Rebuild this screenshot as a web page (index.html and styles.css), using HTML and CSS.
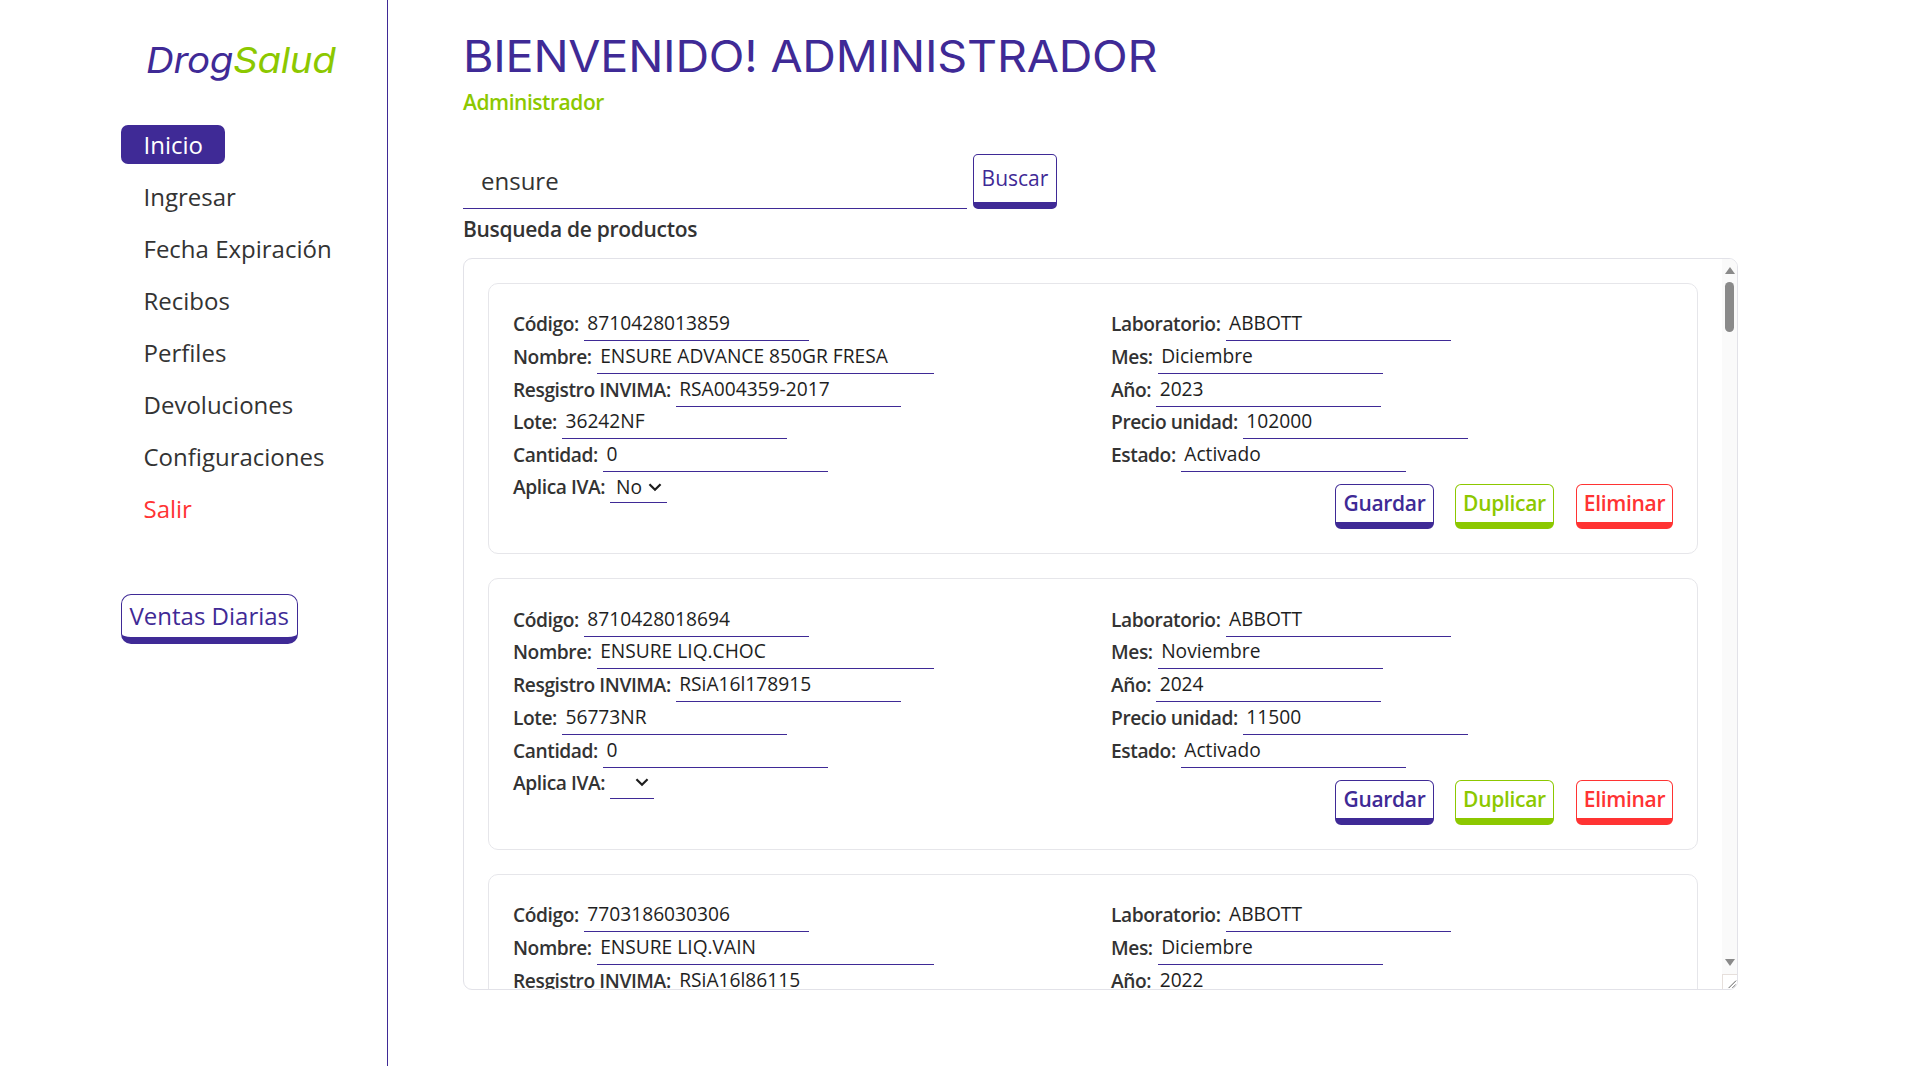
FILE: index.html
```html
<!DOCTYPE html>
<html lang="es">
<head>
<meta charset="utf-8">
<title>DrogSalud</title>
<link rel="stylesheet" href="styles.css">
</head>
<body>
<aside class="sidebar">
  <div class="logo"><span class="logo-a">Drog</span><span class="logo-b">Salud</span></div>
  <nav class="nav">
    <a class="nav-item active">Inicio</a>
    <a class="nav-item">Ingresar</a>
    <a class="nav-item">Fecha Expiración</a>
    <a class="nav-item">Recibos</a>
    <a class="nav-item">Perfiles</a>
    <a class="nav-item">Devoluciones</a>
    <a class="nav-item">Configuraciones</a>
    <a class="nav-item danger">Salir</a>
  </nav>
  <a class="btn-ventas">Ventas Diarias</a>
</aside>
<main class="main">
  <h1 class="title">BIENVENIDO! ADMINISTRADOR</h1>
  <div class="role">Administrador</div>
  <div class="search">
    <div class="search-input">ensure</div>
    <a class="btn-buscar">Buscar</a>
  </div>
  <div class="section-label">Busqueda de productos</div>
  <section class="box">
    <div class="list">
      <article class="card">
        <div class="col">
          <div class="row"><span class="lbl">Código:</span><span class="field w225">8710428013859</span></div>
          <div class="row"><span class="lbl">Nombre:</span><span class="field w337">ENSURE ADVANCE 850GR FRESA</span></div>
          <div class="row"><span class="lbl">Resgistro INVIMA:</span><span class="field w225">RSA004359-2017</span></div>
          <div class="row"><span class="lbl">Lote:</span><span class="field w225">36242NF</span></div>
          <div class="row"><span class="lbl">Cantidad:</span><span class="field w225">0</span></div>
          <div class="row row-select"><span class="lbl">Aplica IVA:</span><span class="select">No<svg class="chev" viewBox="0 0 14 9"><path d="M2 2l5 5 5-5"/></svg></span></div>
        </div>
        <div class="col">
          <div class="row"><span class="lbl">Laboratorio:</span><span class="field w225">ABBOTT</span></div>
          <div class="row"><span class="lbl">Mes:</span><span class="field w225">Diciembre</span></div>
          <div class="row"><span class="lbl">Año:</span><span class="field w225">2023</span></div>
          <div class="row"><span class="lbl">Precio unidad:</span><span class="field w225">102000</span></div>
          <div class="row"><span class="lbl">Estado:</span><span class="field w225">Activado</span></div>
          <div class="actions">
            <a class="btn purple">Guardar</a>
            <a class="btn green">Duplicar</a>
            <a class="btn red">Eliminar</a>
          </div>
        </div>
      </article>
      <article class="card">
        <div class="col">
          <div class="row"><span class="lbl">Código:</span><span class="field w225">8710428018694</span></div>
          <div class="row"><span class="lbl">Nombre:</span><span class="field w337">ENSURE LIQ.CHOC</span></div>
          <div class="row"><span class="lbl">Resgistro INVIMA:</span><span class="field w225">RSiA16l178915</span></div>
          <div class="row"><span class="lbl">Lote:</span><span class="field w225">56773NR</span></div>
          <div class="row"><span class="lbl">Cantidad:</span><span class="field w225">0</span></div>
          <div class="row row-select"><span class="lbl">Aplica IVA:</span><span class="select empty"><svg class="chev" viewBox="0 0 14 9"><path d="M2 2l5 5 5-5"/></svg></span></div>
        </div>
        <div class="col">
          <div class="row"><span class="lbl">Laboratorio:</span><span class="field w225">ABBOTT</span></div>
          <div class="row"><span class="lbl">Mes:</span><span class="field w225">Noviembre</span></div>
          <div class="row"><span class="lbl">Año:</span><span class="field w225">2024</span></div>
          <div class="row"><span class="lbl">Precio unidad:</span><span class="field w225">11500</span></div>
          <div class="row"><span class="lbl">Estado:</span><span class="field w225">Activado</span></div>
          <div class="actions">
            <a class="btn purple">Guardar</a>
            <a class="btn green">Duplicar</a>
            <a class="btn red">Eliminar</a>
          </div>
        </div>
      </article>
      <article class="card">
        <div class="col">
          <div class="row"><span class="lbl">Código:</span><span class="field w225">7703186030306</span></div>
          <div class="row"><span class="lbl">Nombre:</span><span class="field w337">ENSURE LIQ.VAIN</span></div>
          <div class="row"><span class="lbl">Resgistro INVIMA:</span><span class="field w225">RSiA16l86115</span></div>
        </div>
        <div class="col">
          <div class="row"><span class="lbl">Laboratorio:</span><span class="field w225">ABBOTT</span></div>
          <div class="row"><span class="lbl">Mes:</span><span class="field w225">Diciembre</span></div>
          <div class="row"><span class="lbl">Año:</span><span class="field w225">2022</span></div>
        </div>
      </article>
    </div>
    <div class="scrollbar">
      <svg class="arrow up" viewBox="0 0 10 7"><path d="M5 0l5 7H0z"/></svg>
      <div class="thumb"></div>
      <div class="spacer"></div>
      <svg class="arrow down" viewBox="0 0 10 7"><path d="M0 0h10L5 7z"/></svg>
      <div class="resizer"><svg viewBox="0 0 15 15"><path d="M6 14L14 6M10 14l4-4"/></svg></div>
    </div>
  </section>
</main>
</body>
</html>
```

FILE: styles.css
```css
* { box-sizing: border-box; }

html, body { margin: 0; padding: 0; background: #fff; }

body {
  display: flex;
  align-items: flex-start;
  font-family: "Open Sans", "Noto Sans", sans-serif;
  color: #212529;
}

.sidebar {
  width: 388px;
  height: 1066px;
  flex: none;
  border-right: 1.5px solid #3f2a96;
  padding: 38px 0 0 121px;
}

.logo {
  width: 200px;
  font-family: Inter, sans-serif;
  font-style: italic;
  font-weight: 400;
  font-size: 36px;
  line-height: 44px;
  letter-spacing: -0.3px;
  margin-left: 25px;
  transform: scaleX(1.07);
  transform-origin: left center;
}
.logo-a { color: #3f2a96; }
.logo-b { color: #8cc800; }

.nav {
  display: flex;
  flex-direction: column;
  align-items: flex-start;
  margin-top: 43px;
  gap: 13px;
}
.nav-item {
  font-size: 24px;
  line-height: 39px;
  height: 39px;
  padding: 0 22.5px;
  color: #333;
  border-radius: 7px;
}
.nav-item.active { background: #3f2a96; color: #fff; }
.nav-item.danger { color: #ff3333; }

.btn-ventas {
  display: inline-block;
  margin-top: 66px;
  height: 50px;
  padding: 0 7.5px;
  font-size: 24px;
  line-height: 41px;
  color: #3f2a96;
  border: 1.5px solid #3f2a96;
  border-bottom-width: 7px;
  border-radius: 10px;
}

.main {
  flex: 1;
  padding: 24px 0 0 75px;
}

.title {
  margin: 0;
  font-family: Inter, sans-serif;
  font-weight: 400;
  font-size: 44px;
  line-height: 64px;
  letter-spacing: -0.2px;
  color: #3f2a96;
  transform: scaleX(1.06);
  transform-origin: left center;
}
.role {
  font-size: 21px;
  font-weight: 600;
  line-height: 28px;
  color: #8cc800;
  letter-spacing: -0.45px;
}

.search {
  display: flex;
  align-items: flex-end;
  gap: 6px;
  margin-top: 38px;
}
.search-input {
  width: 504px;
  height: 45px;
  padding-left: 18px;
  font-size: 24px;
  line-height: 33px;
  border-bottom: 1.5px solid #3f2a96;
  color: #333;
}
.btn-buscar {
  width: 84px;
  height: 55px;
  border: 1.5px solid #3f2a96;
  border-bottom-width: 7px;
  border-radius: 5px;
  text-align: center;
  font-size: 21px;
  line-height: 46px;
  color: #3f2a96;
}
.section-label {
  margin-top: 5px;
  font-size: 21px;
  font-weight: 600;
  line-height: 31px;
  letter-spacing: -0.3px;
  color: #333;
}

.box {
  display: flex;
  width: 1275px;
  height: 732px;
  margin-top: 13px;
  border: 1.5px solid #e2e2e8;
  border-radius: 9px;
  overflow: hidden;
}
.list {
  flex: 1;
  min-width: 0;
  overflow: hidden;
  padding: 23.5px 24px 0;
  display: flex;
  flex-direction: column;
  gap: 24px;
}
.card {
  flex: none;
  display: grid;
  grid-template-columns: 562px 562px;
  column-gap: 36px;
  min-height: 271.5px;
  padding: 24.8px 24px 0;
  border: 1.5px solid #e6e6ea;
  border-radius: 10px;
}
.row {
  display: flex;
  align-items: flex-end;
  gap: 5px;
  height: 32.8px;
}
.row-select { height: 31px; }
.lbl {
  font-size: 19.2px;
  font-weight: 600;
  letter-spacing: -0.42px;
  line-height: 26px;
  color: #333;
  padding-bottom: 4px;
}
.row-select .lbl { padding-bottom: 3px; }
.field {
  display: block;
  height: 30px;
  padding: 0 3.5px;
  font-size: 19.2px;
  line-height: 24px;
  color: #1e1e1e;
  border-bottom: 1.5px solid #3f2a96;
  white-space: nowrap;
}
.w225 { width: 225px; }
.w337 { width: 337px; }

.select {
  display: flex;
  align-items: center;
  gap: 5px;
  height: 30px;
  width: 57px;
  padding: 0 6px 2px;
  font-size: 19.2px;
  line-height: 24px;
  color: #1e1e1e;
  border-bottom: 1.5px solid #3f2a96;
}
.select.empty { width: 44px; justify-content: flex-end; padding: 0 4px 2px; }
.chev { width: 16px; height: 10px; flex: none; }
.chev path { fill: none; stroke: #1e1e1e; stroke-width: 2; }

.actions {
  display: flex;
  justify-content: flex-end;
  gap: 21px;
  margin-top: 12px;
}
.btn {
  width: 99px;
  height: 45px;
  border: 1.5px solid currentColor;
  border-bottom-width: 7px;
  border-radius: 6px;
  text-align: center;
  font-size: 21px;
  font-weight: 600;
  line-height: 36px;
  letter-spacing: -0.3px;
}
.purple { color: #3f2a96; }
.green { color: #8cc800; }
.red { color: #ff3333; width: 97px; margin-left: 1px; }

.scrollbar {
  flex: none;
  width: 15px;
  display: flex;
  flex-direction: column;
  align-items: center;
  background: #fafafa;
}
.arrow { width: 10px; height: 7px; flex: none; }
.arrow path { fill: #8a8a8a; }
.arrow.up { margin-top: 8px; }
.thumb {
  width: 9px;
  height: 50px;
  margin-top: 8px;
  border-radius: 5px;
  background: #8a8a8a;
}
.spacer { flex: 1; }
.arrow.down { margin-bottom: 8px; }
.resizer {
  width: 15px;
  height: 15px;
  flex: none;
  background: #fff;
  border: 1px solid #e6dfdb;
  border-width: 1px 0 0 1px;
}
.resizer svg { display: block; width: 14px; height: 14px; }
.resizer path { fill: none; stroke: #555; stroke-width: 1; }
```
